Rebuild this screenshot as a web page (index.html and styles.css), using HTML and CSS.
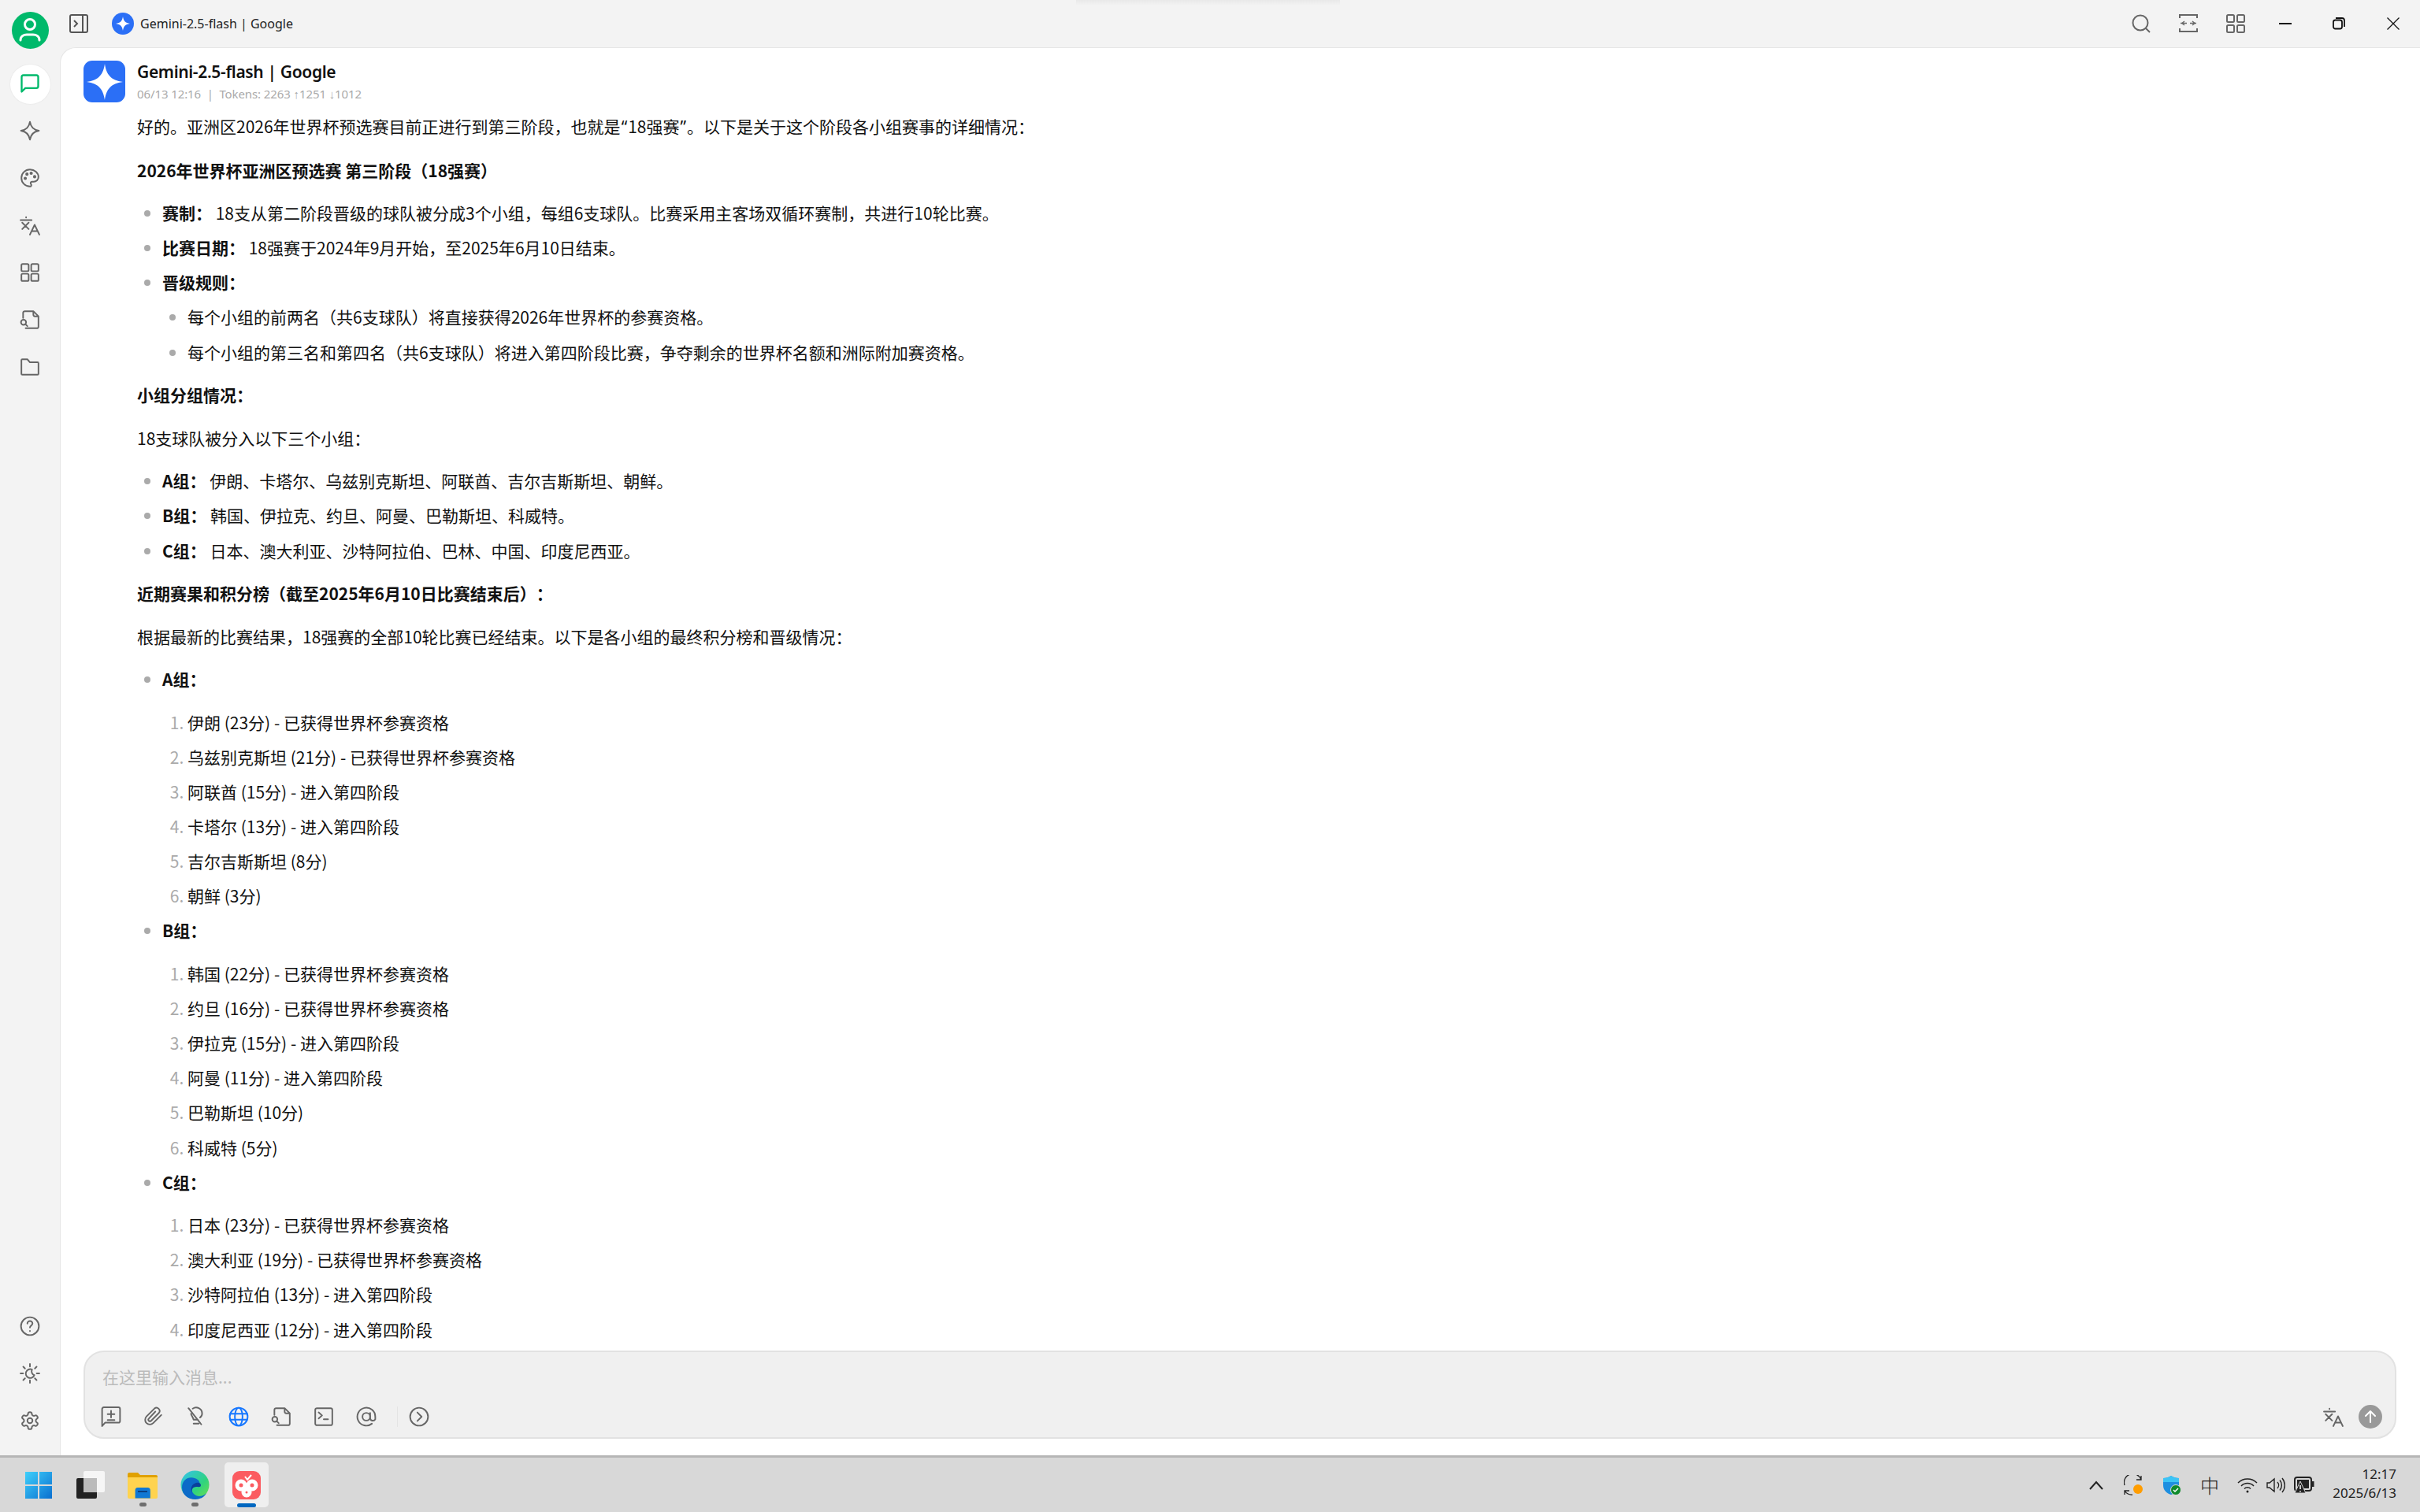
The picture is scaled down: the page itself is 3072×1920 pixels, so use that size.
FILE: index.html
```html
<!DOCTYPE html>
<html lang="zh-CN">
<head>
    <meta charset="UTF-8">
    <title>Gemini-2.5-flash | Google</title>
    <link rel="stylesheet" href="styles.css">
</head>
<body>
    <div class="window">
        <aside class="sidebar">
            <div class="side-top">
                <div class="avatar-slot">
                    <div class="user-avatar">
                        <svg width="30" height="32" viewBox="0 0 30 32" fill="none" stroke="#fff" stroke-width="3" stroke-linecap="round"><circle cx="15" cy="9" r="6.5"/><path d="M3 29c0-5 4-7 8-7h8c4 0 8 2 8 7"/></svg>
                    </div>
                </div>
                <div class="side-item active">
                    <svg width="28" height="28" viewBox="0 0 24 24" fill="none" stroke="#00b96b" stroke-width="2" stroke-linejoin="round"><path d="M21 15a2 2 0 0 1-2 2H7l-4 4V5a2 2 0 0 1 2-2h14a2 2 0 0 1 2 2z"/></svg>
                </div>
                <div class="side-item">
                    <svg class="icon" viewBox="0 0 24 24"><path d="M12 1.500C13 8 16 11 22.500 12C16 13 13 16 12 22.500C11 16 8 13 1.500 12C8 11 11 8 12 1.500z"/></svg>
                </div>
                <div class="side-item">
                    <svg class="icon" viewBox="0 0 24 24"><circle cx="13.500" cy="6.500" r="1"/><circle cx="17.500" cy="10.500" r="1"/><circle cx="8.500" cy="7.500" r="1"/><circle cx="6.500" cy="12.500" r="1"/><path d="M12 2C6.500 2 2 6.500 2 12s4.500 10 10 10c.926 0 1.648-.746 1.648-1.688 0-.437-.18-.835-.437-1.125-.29-.289-.438-.652-.438-1.125a1.640 1.640 0 0 1 1.668-1.668h1.996c3.051 0 5.555-2.503 5.555-5.554C21.965 6.012 17.461 2 12 2z"/></svg>
                </div>
                <div class="side-item">
                    <svg class="icon" viewBox="0 0 24 24"><path d="M1 6h13M7.500 2.500v.5M3 9l7.500 7.500M10.500 9 3 16.500M12 23l5.500-11.500L23 23M14 19h7"/></svg>
                </div>
                <div class="side-item">
                    <svg class="icon" viewBox="0 0 24 24"><rect x="2" y="2" width="8.500" height="8.500" rx="1.500"/><rect x="13.500" y="2" width="8.500" height="8.500" rx="1.500"/><rect x="2" y="13.500" width="8.500" height="8.500" rx="1.500"/><rect x="13.500" y="13.500" width="8.500" height="8.500" rx="1.500"/></svg>
                </div>
                <div class="side-item">
                    <svg class="icon" viewBox="0 0 24 24"><path d="M4 10V4a2 2 0 0 1 2-2h10l6 6v12a2 2 0 0 1-2 2H7M16 2v4a2 2 0 0 0 2 2h4"/><circle cx="4.500" cy="15" r="3"/><path d="m6.700 17.200 2.300 2.300"/></svg>
                </div>
                <div class="side-item">
                    <svg class="icon" viewBox="0 0 24 24"><path d="M2 4a1 1 0 0 1 1-1h6l3 3.500h9a1 1 0 0 1 1 1V20a1 1 0 0 1-1 1H3a1 1 0 0 1-1-1z"/></svg>
                </div>
            </div>
            <div class="side-bottom">
                <div class="side-item">
                    <svg class="icon" viewBox="0 0 24 24"><circle cx="12" cy="12" r="10.500"/><path d="M9 9a3 3 0 0 1 6 0c0 2-3 2.500-3 4.500M12 17.500v.2"/></svg>
                </div>
                <div class="side-item">
                    <svg class="icon" viewBox="0 0 24 24"><path d="M12 1v3M12 20v3M1 12h3M20 12h3M4.200 4.200l2 2M17.800 17.800l2 2M4.200 19.800l2-2M17.800 6.200l2-2"/><path d="M14.500 7.500a5.200 5.200 0 1 0 2.700 6.500 4.500 4.500 0 0 1-2.700-6.500z"/></svg>
                </div>
                <div class="side-item">
                    <svg class="icon" viewBox="0 0 24 24"><path d="M12.220 2h-.44a2 2 0 0 0-2 2v.18a2 2 0 0 1-1 1.730l-.43.25a2 2 0 0 1-2 0l-.15-.08a2 2 0 0 0-2.730.73l-.22.38a2 2 0 0 0 .73 2.730l.15.1a2 2 0 0 1 1 1.720v.51a2 2 0 0 1-1 1.740l-.15.09a2 2 0 0 0-.73 2.730l.22.38a2 2 0 0 0 2.730.73l.15-.08a2 2 0 0 1 2 0l.43.25a2 2 0 0 1 1 1.730V20a2 2 0 0 0 2 2h.44a2 2 0 0 0 2-2v-.18a2 2 0 0 1 1-1.730l.43-.25a2 2 0 0 1 2 0l.15.08a2 2 0 0 0 2.730-.73l.22-.39a2 2 0 0 0-.73-2.730l-.15-.08a2 2 0 0 1-1-1.740v-.5a2 2 0 0 1 1-1.740l.15-.09a2 2 0 0 0 .73-2.730l-.22-.38a2 2 0 0 0-2.730-.73l-.15.08a2 2 0 0 1-2 0l-.43-.25a2 2 0 0 1-1-1.730V4a2 2 0 0 0-2-2z"/><circle cx="12" cy="12" r="3"/></svg>
                </div>
            </div>
        </aside>

        <header class="titlebar">
            <svg class="toggle" width="24" height="24" viewBox="0 0 24 24" fill="none" stroke="#555" stroke-width="2"><rect x="1" y="1" width="22" height="22" rx="2"/><path d="M17 1v22M6 8l4 4-4 4"/></svg>
            <div class="title-logo">
                <svg width="18" height="18" viewBox="0 0 24 24" fill="#fff"><path d="M12 0c1 7 4 11 12 12-8 1-11 5-12 12-1-7-4-11-12-12 8-1 11-5 12-12z"/></svg>
            </div>
            <span class="title-text">Gemini-2.5-flash | Google</span>
            <div class="top-shadow"></div>
            <div class="title-actions">
                <div class="title-btn">
                    <svg width="24" height="24" viewBox="0 0 24 24" fill="none" stroke="#666" stroke-width="2"><circle cx="11" cy="11" r="9.500"/><path d="m18 18 5 5"/></svg>
                </div>
                <div class="title-btn">
                    <svg width="24" height="24" viewBox="0 0 24 24" fill="none" stroke="#666" stroke-width="2"><path d="M1 5V1h22v4M1 18v4h22v-4"/><path d="M2 11.500h8M22 11.500h-8" stroke-width="1.500"/><path d="m7 9-3 2.500L7 14M17 9l3 2.500L17 14" stroke-width="1.500"/></svg>
                </div>
                <div class="title-btn">
                    <svg width="24" height="24" viewBox="0 0 24 24" fill="none" stroke="#666" stroke-width="2"><rect x="1" y="1" width="9" height="9" rx="1.500"/><rect x="14" y="1" width="9" height="9" rx="1.500"/><rect x="1" y="14" width="9" height="9" rx="1.500"/><rect x="14" y="14" width="9" height="9" rx="1.500"/></svg>
                </div>
                <div class="win-btn win-min">
                    <svg width="16" height="16" viewBox="0 0 16 16" fill="none" stroke="#111" stroke-width="2"><path d="M0 8h16"/></svg>
                </div>
                <div class="win-btn win-restore">
                    <svg width="16" height="16" viewBox="0 0 16 16" fill="none" stroke="#111" stroke-width="1.800"><rect x="1" y="3.500" width="11" height="11" rx="2.500"/><path d="M4 1h8a3 3 0 0 1 3 3v8"/></svg>
                </div>
                <div class="win-btn">
                    <svg width="16" height="16" viewBox="0 0 16 16" fill="none" stroke="#111" stroke-width="1.300"><path d="m.5.500 15 15M15.500.500l-15 15"/></svg>
                </div>
            </div>
        </header>

        <main class="main">
            <section class="chat">
                <div class="msg-head">
                    <div class="model-avatar">
                        <svg width="46" height="46" viewBox="0 0 24 24" fill="#fff"><path d="M12 0c1 7 4 11 12 12-8 1-11 5-12 12-1-7-4-11-12-12 8-1 11-5 12-12z"/></svg>
                    </div>
                    <div class="msg-info">
                        <div class="msg-name">Gemini-2.5-flash | Google</div>
                        <div class="msg-meta">06/13 12:16 &nbsp;|&nbsp; Tokens: 2263 ↑1251 ↓1012</div>
                    </div>
                </div>
                <div class="markdown">
                    <p>好的。亚洲区2026年世界杯预选赛目前正进行到第三阶段，也就是<span class="narrow-quote">“</span>18强赛<span class="narrow-quote">”</span>。以下是关于这个阶段各小组赛事的详细情况：</p>
                    <p><strong>2026年世界杯亚洲区预选赛 第三阶段（18强赛）</strong></p>
                    <ul>
                        <li><strong>赛制：</strong> 18支从第二阶段晋级的球队被分成3个小组，每组6支球队。比赛采用主客场双循环赛制，共进行10轮比赛。</li>
                        <li><strong>比赛日期：</strong> 18强赛于2024年9月开始，至2025年6月10日结束。</li>
                        <li><strong>晋级规则：</strong>
                            <ul>
                                <li>每个小组的前两名（共6支球队）将直接获得2026年世界杯的参赛资格。</li>
                                <li>每个小组的第三名和第四名（共6支球队）将进入第四阶段比赛，争夺剩余的世界杯名额和洲际附加赛资格。</li>
                            </ul>
                        </li>
                    </ul>
                    <p><strong>小组分组情况：</strong></p>
                    <p>18支球队被分入以下三个小组：</p>
                    <ul>
                        <li><strong>A组：</strong> 伊朗、卡塔尔、乌兹别克斯坦、阿联酋、吉尔吉斯斯坦、朝鲜。</li>
                        <li><strong>B组：</strong> 韩国、伊拉克、约旦、阿曼、巴勒斯坦、科威特。</li>
                        <li><strong>C组：</strong> 日本、澳大利亚、沙特阿拉伯、巴林、中国、印度尼西亚。</li>
                    </ul>
                    <p><strong>近期赛果和积分榜（截至2025年6月10日比赛结束后）：</strong></p>
                    <p>根据最新的比赛结果，18强赛的全部10轮比赛已经结束。以下是各小组的最终积分榜和晋级情况：</p>
                    <ul>
                        <li><p><strong>A组：</strong></p>
                            <ol>
                                <li>伊朗 (23分) - 已获得世界杯参赛资格</li>
                                <li>乌兹别克斯坦 (21分) - 已获得世界杯参赛资格</li>
                                <li>阿联酋 (15分) - 进入第四阶段</li>
                                <li>卡塔尔 (13分) - 进入第四阶段</li>
                                <li>吉尔吉斯斯坦 (8分)</li>
                                <li>朝鲜 (3分)</li>
                            </ol>
                        </li>
                        <li><p><strong>B组：</strong></p>
                            <ol>
                                <li>韩国 (22分) - 已获得世界杯参赛资格</li>
                                <li>约旦 (16分) - 已获得世界杯参赛资格</li>
                                <li>伊拉克 (15分) - 进入第四阶段</li>
                                <li>阿曼 (11分) - 进入第四阶段</li>
                                <li>巴勒斯坦 (10分)</li>
                                <li>科威特 (5分)</li>
                            </ol>
                        </li>
                        <li><p><strong>C组：</strong></p>
                            <ol>
                                <li>日本 (23分) - 已获得世界杯参赛资格</li>
                                <li>澳大利亚 (19分) - 已获得世界杯参赛资格</li>
                                <li>沙特阿拉伯 (13分) - 进入第四阶段</li>
                                <li>印度尼西亚 (12分) - 进入第四阶段</li>
                            </ol>
                        </li>
                    </ul>
                </div>
            </section>

            <section class="composer">
                <div class="placeholder">在这里输入消息...</div>
                <div class="tools">
                    <svg class="icon" viewBox="0 0 24 24"><path d="M1.500 3a2 2 0 0 1 2-2h17a2 2 0 0 1 2 2v14a2 2 0 0 1-2 2H5l-3.500 4zM12 5v8M8 9h8M8 16h8"/></svg>
                    <svg class="icon" viewBox="0 0 24 24"><path d="m21 10-9.500 9.500a5.500 5.500 0 0 1-7.800-7.800l9.300-9.300a3.700 3.700 0 0 1 5.200 5.200l-9.200 9.200a1.800 1.800 0 0 1-2.600-2.600L14 6"/></svg>
                    <svg class="icon" viewBox="0 0 24 24"><path d="M3 2l15 19M8 2.500A7 7 0 0 1 19 8c0 2-1 4-2.500 5M6 8.500c0 2 2.500 4 3 7h5M9 20h6"/></svg>
                    <svg class="icon globe" viewBox="0 0 24 24"><circle cx="12" cy="12" r="10.500"/><ellipse cx="12" cy="12" rx="4.500" ry="10.500"/><path d="M2 8.500h20M2 15.500h20"/></svg>
                    <svg class="icon" viewBox="0 0 24 24"><path d="M4 10V4a2 2 0 0 1 2-2h10l6 6v12a2 2 0 0 1-2 2H7M16 2v4a2 2 0 0 0 2 2h4"/><circle cx="4.500" cy="15" r="3"/><path d="m6.700 17.200 2.300 2.300"/></svg>
                    <svg class="icon" viewBox="0 0 24 24"><rect x="2" y="2" width="20" height="20" rx="2"/><path d="m6 7 4 3.500L6 14M12 15h5"/></svg>
                    <svg class="icon" viewBox="0 0 24 24"><circle cx="12" cy="12" r="4.500"/><path d="M16.500 7.500v6a3.200 3.200 0 0 0 6 1.500V12a10.500 10.500 0 1 0-4 8.200"/></svg>
                    <span class="tool-divider"></span>
                    <svg class="icon" viewBox="0 0 24 24"><circle cx="12" cy="12" r="10.500"/><path d="m10 7 5 5-5 5"/></svg>
                    <div class="tools-right">
                        <svg class="icon" viewBox="0 0 24 24"><path d="M1 6h13M7.500 2.500v.5M3 9l7.500 7.500M10.500 9 3 16.500M12 23l5.500-11.500L23 23M14 19h7"/></svg>
                        <div class="send">
                            <svg width="18" height="18" viewBox="0 0 18 18" fill="none" stroke="#fff" stroke-width="2" stroke-linecap="round" stroke-linejoin="round"><path d="M9 16V2M3 8l6-6 6 6"/></svg>
                        </div>
                    </div>
                </div>
            </section>
        </main>
    </div>

    <footer class="taskbar">
        <div class="task-slot">
            <svg width="36" height="36" viewBox="0 0 36 36"><defs><linearGradient id="winblue" x1="0" y1="0" x2="1" y2="1"><stop offset="0" stop-color="#3fd0fb"/><stop offset="1" stop-color="#0a6fd0"/></linearGradient></defs><path fill="url(#winblue)" d="M1 1h16v16H1zM19 1h16v16H19zM1 19h16v16H1zM19 19h16v16H19z"/></svg>
        </div>
        <div class="task-slot">
            <svg width="36" height="36" viewBox="0 0 36 36"><rect x="0" y="9" width="26" height="26" rx="2" fill="#222"/><rect x="9" y="0" width="27" height="27" rx="2" fill="#f6f6f6"/><rect x="9" y="9" width="17" height="18" fill="#bbb"/></svg>
        </div>
        <div class="task-slot">
            <svg width="38" height="34" viewBox="0 0 38 34"><path d="M0 3a2 2 0 0 1 2-2h11l3 3h20a2 2 0 0 1 2 2v6H0z" fill="#e0a100"/><path d="M0 7h38v25a2 2 0 0 1-2 2H2a2 2 0 0 1-2-2z" fill="#ffd34f"/><path d="M7 34V23a4 4 0 0 1 4-4h16a4 4 0 0 1 4 4v11z" fill="#0f78d4" transform="translate(4 3) scale(.8 .9)"/><path d="M13 25h12" stroke="#0a3f80" stroke-width="2"/></svg>
            <span class="task-dot"></span>
        </div>
        <div class="task-slot">
            <svg width="37" height="37" viewBox="0 0 37 37"><defs><linearGradient id="edgeg" x1="0" y1="0" x2="1" y2="1"><stop offset="0" stop-color="#35c1f1"/><stop offset=".6" stop-color="#2fd37f"/><stop offset="1" stop-color="#6fe04a"/></linearGradient></defs><circle cx="18.500" cy="18.500" r="18" fill="url(#edgeg)"/><path d="M2 22C2 10 14 6 22 12c4 3 3 9-2 9-6 0-7 5-3 9 5 5 12 3 16-1-3 6-9 8-14 8C10 37 2 31 2 22z" fill="#0c6bc8"/><path d="M16 30c-4-5-3-12 4-14 4-1 6 1 6 3 0 3-3 2-6 2-5 0-7 5-4 9z" fill="#0a3f9c"/></svg>
            <span class="task-dot"></span>
        </div>
        <div class="task-slot task-active">
            <div class="app-icon">
                <svg width="32" height="34" viewBox="0 0 32 34" fill="none" stroke="#fff" stroke-width="5"><circle cx="9" cy="17" r="5"/><circle cx="23" cy="17" r="5"/><circle cx="16" cy="26" r="4"/><path d="M14 6l3 4 5-6" stroke-width="2"/></svg>
            </div>
            <span class="task-indicator"></span>
        </div>
        <div class="tray">
            <div class="tray-item">
                <svg width="18" height="12" viewBox="0 0 18 12" fill="none" stroke="#222" stroke-width="2"><path d="m1 11 8-9 8 9"/></svg>
            </div>
            <div class="tray-item">
                <svg width="26" height="26" viewBox="0 0 26 26" fill="none" stroke="#222" stroke-width="1.300"><path d="M1 13A11 11 0 0 1 22 6M22 1v5h-6M1 25v-5h6M1 20a11 11 0 0 0 10 5"/><circle cx="18" cy="18" r="6" fill="#ff9d00" stroke="none"/></svg>
            </div>
            <div class="tray-item">
                <svg width="24" height="24" viewBox="0 0 24 24"><path d="M11 0c3 2 6 3 10 3v9c0 6-4 10-10 12C5 22 1 18 1 12V3c4 0 7-1 10-3z" fill="#1e8fe0"/><path d="M11 0c3 2 6 3 10 3v5H1V3c4 0 7-1 10-3z" fill="#3cc4f5"/><circle cx="17" cy="18" r="6.500" fill="#0f8a2c" stroke="#d8d8d8"/><path d="m14 18 2 2 4-4" fill="none" stroke="#fff" stroke-width="1.500"/></svg>
            </div>
            <div class="tray-item ime">中</div>
            <div class="tray-item">
                <svg width="26" height="20" viewBox="0 0 26 20" fill="none" stroke="#222" stroke-width="1.500"><path d="M1 7a17 17 0 0 1 24 0M5 11a11 11 0 0 1 16 0M9 14.500a5.500 5.500 0 0 1 8 0"/><circle cx="13" cy="18" r="1.500" fill="#222" stroke="none"/></svg>
            </div>
            <div class="tray-item tray-narrow">
                <svg width="24" height="20" viewBox="0 0 24 20" fill="none" stroke="#222" stroke-width="1.400"><path d="M1 7h3l6-5v16l-6-5H1zM14 6a6 6 0 0 1 0 8M17 3.500a10 10 0 0 1 0 13M20 1a14 14 0 0 1 0 18"/></svg>
            </div>
            <div class="tray-item">
                <svg width="26" height="22" viewBox="0 0 26 22"><rect x="1" y="1" width="21" height="17" rx="3" fill="none" stroke="#222" stroke-width="2"/><rect x="4" y="4" width="15" height="11" fill="#222"/><rect x="23" y="6" width="2.500" height="7" fill="#222"/><path d="M8 6 1 21h14z" fill="#222" stroke="#d8d8d8"/><path d="M8 11v5M8 18v1.500" stroke="#fff" stroke-width="1.500"/></svg>
            </div>
            <div class="clock">
                <div>12:17</div>
                <div>2025/6/13</div>
            </div>
        </div>
    </footer>
</body>
</html>
```

FILE: styles.css
```css
* {
    margin: 0;
    padding: 0;
    box-sizing: border-box;
}
html, body {
    height: 100%;
    overflow: hidden;
}
body {
    display: flex;
    flex-direction: column;
    font-family: "Noto Sans CJK SC", "Noto Sans", sans-serif;
    background-color: #f3f3f3;
    color: #111;
}
.icon {
    width: 26px;
    height: 26px;
    fill: none;
    stroke: #666;
    stroke-width: 1.8;
    stroke-linecap: round;
    stroke-linejoin: round;
}
.window {
    flex: 1;
    min-height: 0;
    display: grid;
    grid-template-columns: 76px 1fr;
    grid-template-rows: 60px 1fr;
}

/* left rail */
.sidebar {
    grid-row: 1 / 3;
    display: flex;
    flex-direction: column;
    justify-content: space-between;
    padding-bottom: 14px;
}
.avatar-slot {
    height: 76px;
    display: flex;
    align-items: center;
    justify-content: center;
}
.user-avatar {
    width: 47px;
    height: 47px;
    border-radius: 50%;
    background: #00b96b;
    display: flex;
    align-items: center;
    justify-content: center;
}
.side-item {
    height: 60px;
    display: flex;
    align-items: center;
    justify-content: center;
}
.side-item.active {
    position: relative;
}
.side-item.active::before {
    content: "";
    position: absolute;
    left: 12px;
    top: 5px;
    width: 51px;
    height: 50px;
    border-radius: 50%;
    background: #fff;
    border: 1px solid #ececec;
}
.side-item.active svg {
    position: relative;
}

/* title bar */
.titlebar {
    position: relative;
    display: flex;
    align-items: center;
    padding-left: 12px;
}
.toggle {
    margin-right: 30px;
}
.title-logo {
    width: 28px;
    height: 28px;
    border-radius: 50%;
    background: #2b6ff6;
    display: flex;
    align-items: center;
    justify-content: center;
    margin-right: 8px;
}
.title-text {
    font-family: "Noto Sans", sans-serif;
    font-size: 16px;
    color: #222;
}
.top-shadow {
    position: absolute;
    top: 0;
    left: 1290px;
    width: 335px;
    height: 7px;
    background: linear-gradient(#e9e9e9, #f3f3f3);
}
.title-actions {
    margin-left: auto;
    display: flex;
    align-items: center;
}
.title-btn {
    width: 60px;
    height: 60px;
    display: flex;
    align-items: center;
    justify-content: center;
}
.win-btn {
    width: 68px;
    height: 60px;
    display: flex;
    align-items: center;
    justify-content: center;
}
.win-min {
    width: 66px;
}
.win-restore {
    width: 70px;
}

/* main panel */
.main {
    min-height: 0;
    min-width: 0;
    background: #fff;
    border-top: 1px solid #e6e6e6;
    border-left: 1px solid #e6e6e6;
    border-top-left-radius: 20px;
    display: flex;
    flex-direction: column;
}
.chat {
    flex: 1;
    min-height: 0;
    overflow: hidden;
    padding: 16px 30px 0 29px;
}
.msg-head {
    display: flex;
    gap: 15px;
    height: 53px;
}
.model-avatar {
    width: 53px;
    height: 53px;
    border-radius: 11px;
    background: #2b6ff6;
    display: flex;
    align-items: center;
    justify-content: center;
}
.msg-name {
    font-family: "Noto Sans", sans-serif;
    font-size: 21px;
    font-weight: 600;
    letter-spacing: -0.35px;
    line-height: 29px;
}
.msg-meta {
    font-family: "Noto Sans", sans-serif;
    font-size: 15px;
    letter-spacing: -0.1px;
    line-height: 24px;
    margin-top: 1px;
    color: #aaa;
}
.markdown {
    margin-top: 14px;
    padding-left: 68px;
    font-size: 21px;
    line-height: 33.6px;
    text-spacing-trim: space-all;
}
.markdown p {
    margin-bottom: 21px;
}
.markdown strong {
    font-weight: 700;
}
.narrow-quote {
    font-family: "Noto Sans", sans-serif;
    padding: 0 1px;
}
.markdown ul,
.markdown ol {
    padding-left: 32px;
}
.markdown ul {
    list-style: disc;
}
.markdown > ul {
    margin-bottom: 21px;
}
.markdown li {
    margin-bottom: 10.5px;
}
.markdown li ul {
    margin-top: 10.5px;
}
.markdown li::marker {
    color: #aaa;
}

/* input box */
.composer {
    margin: 0 30px 21px 29px;
    height: 112px;
    flex-shrink: 0;
    background: #f0f0f0;
    border: 2px solid #e2e2e2;
    border-radius: 26px;
    padding: 14px 16px 0 20px;
}
.placeholder {
    padding-left: 2px;
    font-size: 21px;
    line-height: 34px;
    color: #bbb;
}
.tools {
    margin-top: 19px;
    display: flex;
    align-items: center;
    gap: 28px;
}
.globe {
    stroke: #1677ff;
}
.tool-divider {
    width: 1px;
    height: 26px;
    background: #e4e4e4;
    margin: 0 -14px 0 -2px;
}
.tools-right {
    margin-left: auto;
    display: flex;
    align-items: center;
    gap: 19px;
}
.send {
    width: 30px;
    height: 30px;
    border-radius: 50%;
    background: #999;
    display: flex;
    align-items: center;
    justify-content: center;
}

/* windows taskbar */
.taskbar {
    height: 72px;
    flex-shrink: 0;
    display: flex;
    align-items: center;
    padding: 0 30px 0 16px;
    background: #d8d8d8;
    border-top: 3px solid #b6b6b6;
}
.task-slot {
    width: 66px;
    height: 57px;
    position: relative;
    display: flex;
    align-items: center;
    justify-content: center;
}
.task-dot {
    position: absolute;
    bottom: 1px;
    left: 29px;
    width: 9px;
    height: 5px;
    border-radius: 3px;
    background: #6e6e6e;
}
.task-active::before {
    content: "";
    position: absolute;
    left: 5px;
    right: 5px;
    top: 0;
    bottom: 0;
    border-radius: 5px;
    background: #efefef;
}
.app-icon {
    position: relative;
    width: 36px;
    height: 36px;
    border-radius: 9px;
    background: #fb5b60;
    display: flex;
    align-items: center;
    justify-content: center;
}
.task-indicator {
    position: absolute;
    bottom: 0;
    left: 21px;
    width: 24px;
    height: 5px;
    border-radius: 3px;
    background: #0067c0;
}
.tray {
    margin-left: auto;
    display: flex;
    align-items: center;
}
.tray-item {
    width: 48px;
    display: flex;
    align-items: center;
    justify-content: center;
}
.tray-narrow {
    width: 24px;
}
.ime {
    font-size: 24px;
    line-height: 30px;
    font-weight: 300;
    color: #222;
}
.clock {
    width: 93px;
    padding-bottom: 3px;
    text-align: right;
    font-family: "Noto Sans", sans-serif;
    font-size: 17px;
    line-height: 24px;
    color: #222;
}
```
